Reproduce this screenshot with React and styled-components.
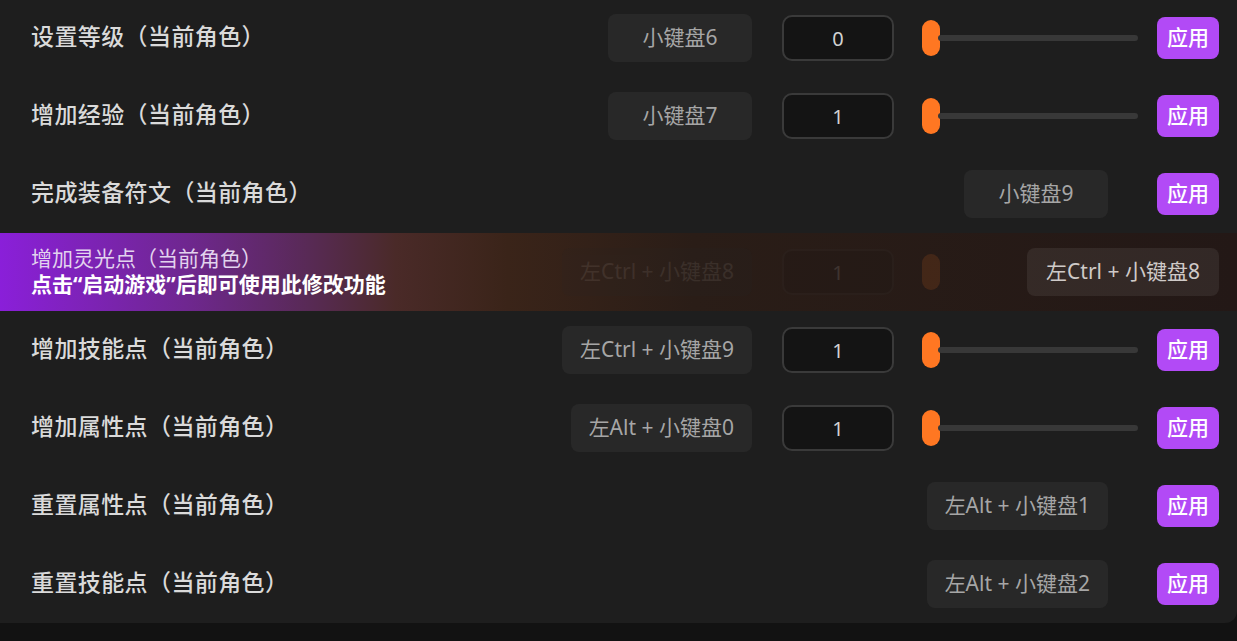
import React from 'react';
import styled, { createGlobalStyle } from 'styled-components';

const GlobalStyle = createGlobalStyle`
  html, body {
    margin: 0;
    padding: 0;
    background: #121212;
  }
  body {
    font-family: "Noto Sans", "Noto Sans CJK SC", sans-serif;
  }
`;

const Page = styled.div`
  width: 1237px;
  height: 641px;
  overflow: hidden;
  background: #121212;
`;

const Panel = styled.div`
  background: #1e1e1e;
  border-bottom-right-radius: 12px;
  margin-top: -1px;
  display: flex;
  flex-direction: column;
`;

const Row = styled.div`
  position: relative;
  height: 78px;
  display: flex;
  align-items: center;
  padding: 0 18px 0 31px;
  background: ${(p) =>
    p.$locked
      ? 'linear-gradient(90deg, #8a1fd9 0%, #6f2790 15%, #582a55 25%, #4a2a28 32%, #3a2419 41%, #2a1d17 56%, #231816 100%)'
      : 'transparent'};
`;

const Label = styled.div`
  flex: 1;
  font-size: 23px;
  font-weight: 500;
  color: #dadada;
  letter-spacing: 0.4px;
  line-height: 30px;
  margin-bottom: 4px;
  visibility: ${(p) => (p.$hidden ? 'hidden' : 'visible')};
`;

const Controls = styled.div`
  display: flex;
  align-items: center;
  opacity: ${(p) => (p.$dim ? 0.13 : 1)};
`;

const Hotkey = styled.div`
  min-width: ${(p) => p.$minWidth || 144}px;
  height: 48px;
  box-sizing: border-box;
  padding: 0 18px 4px;
  border-radius: 8px;
  background: ${(p) => (p.$light ? 'rgba(255,255,255,0.07)' : '#282828')};
  color: ${(p) => (p.$light ? '#cfcac8' : '#a6a6a6')};
  font-size: 21px;
  display: flex;
  align-items: center;
  justify-content: center;
  white-space: nowrap;
  margin-right: ${(p) => p.$gap}px;
`;

const NumberBox = styled.div`
  width: 112px;
  height: 46px;
  box-sizing: border-box;
  border: 2px solid #3a3a3a;
  border-radius: 10px;
  background: #141414;
  color: #d2d2d2;
  font-size: 20px;
  display: flex;
  align-items: center;
  justify-content: center;
  margin-right: 28px;
`;

const Slider = styled.div`
  width: 216px;
  height: 36px;
  display: flex;
  align-items: center;
  margin-right: 19px;
`;

const Track = styled.div`
  flex: 1;
  height: 6px;
  border-radius: 3px;
  background: #383838;
  visibility: ${(p) => (p.$hidden ? 'hidden' : 'visible')};
`;

const Thumb = styled.div`
  width: 18px;
  height: 36px;
  border-radius: 9px;
  background: #ff7722;
  margin-right: -2px;
`;

const ApplyButton = styled.button`
  width: 62px;
  height: 42px;
  border: none;
  border-radius: 8px;
  background: #b24af6;
  color: #ffffff;
  font-family: inherit;
  font-size: 21px;
  font-weight: 500;
  padding: 0 0 5px;
  cursor: pointer;
  visibility: ${(p) => (p.$hidden ? 'hidden' : 'visible')};
`;

const LockOverlay = styled.div`
  position: absolute;
  inset: 0;
  display: flex;
  align-items: center;
  justify-content: space-between;
  padding: 0 18px 0 31px;
`;

const LockText = styled.div`
  display: flex;
  flex-direction: column;
  line-height: 26px;
  margin-bottom: 2px;
`;

const LockTitle = styled.div`
  font-size: 21px;
  color: #e2d3ee;
`;

const LockHint = styled.div`
  font-size: 21px;
  font-weight: 700;
  color: #ffffff;
`;

const rows = [
  { label: '设置等级（当前角色）', key: '小键盘6', value: '0' },
  { label: '增加经验（当前角色）', key: '小键盘7', value: '1' },
  { label: '完成装备符文（当前角色）', key: '小键盘9' },
  { label: '增加灵光点（当前角色）', key: '左Ctrl + 小键盘8', value: '1', locked: true },
  { label: '增加技能点（当前角色）', key: '左Ctrl + 小键盘9', value: '1' },
  { label: '增加属性点（当前角色）', key: '左Alt + 小键盘0', value: '1' },
  { label: '重置属性点（当前角色）', key: '左Alt + 小键盘1' },
  { label: '重置技能点（当前角色）', key: '左Alt + 小键盘2' },
];

const CheatRow = ({ label, hotkey, value, locked }) => {
  const hasSlider = value !== undefined;
  return (
    <Row $locked={locked}>
      <Label $hidden={locked}>{label}</Label>
      <Controls $dim={locked}>
        <Hotkey $gap={hasSlider ? 30 : 49}>{hotkey}</Hotkey>
        {hasSlider && (
          <>
            <NumberBox>{value}</NumberBox>
            <Slider>
              <Thumb />
              <Track $hidden={locked} />
            </Slider>
          </>
        )}
        <ApplyButton $hidden={locked}>应用</ApplyButton>
      </Controls>
      {locked && (
        <LockOverlay>
          <LockText>
            <LockTitle>{label}</LockTitle>
            <LockHint>点击“启动游戏”后即可使用此修改功能</LockHint>
          </LockText>
          <Hotkey $light $gap={0} $minWidth={192}>
            {hotkey}
          </Hotkey>
        </LockOverlay>
      )}
    </Row>
  );
};

export default function App() {
  return (
    <Page>
      <GlobalStyle />
      <Panel>
        {rows.map((r) => (
          <CheatRow
            key={r.label}
            label={r.label}
            hotkey={r.key}
            value={r.value}
            locked={r.locked}
          />
        ))}
      </Panel>
    </Page>
  );
}
